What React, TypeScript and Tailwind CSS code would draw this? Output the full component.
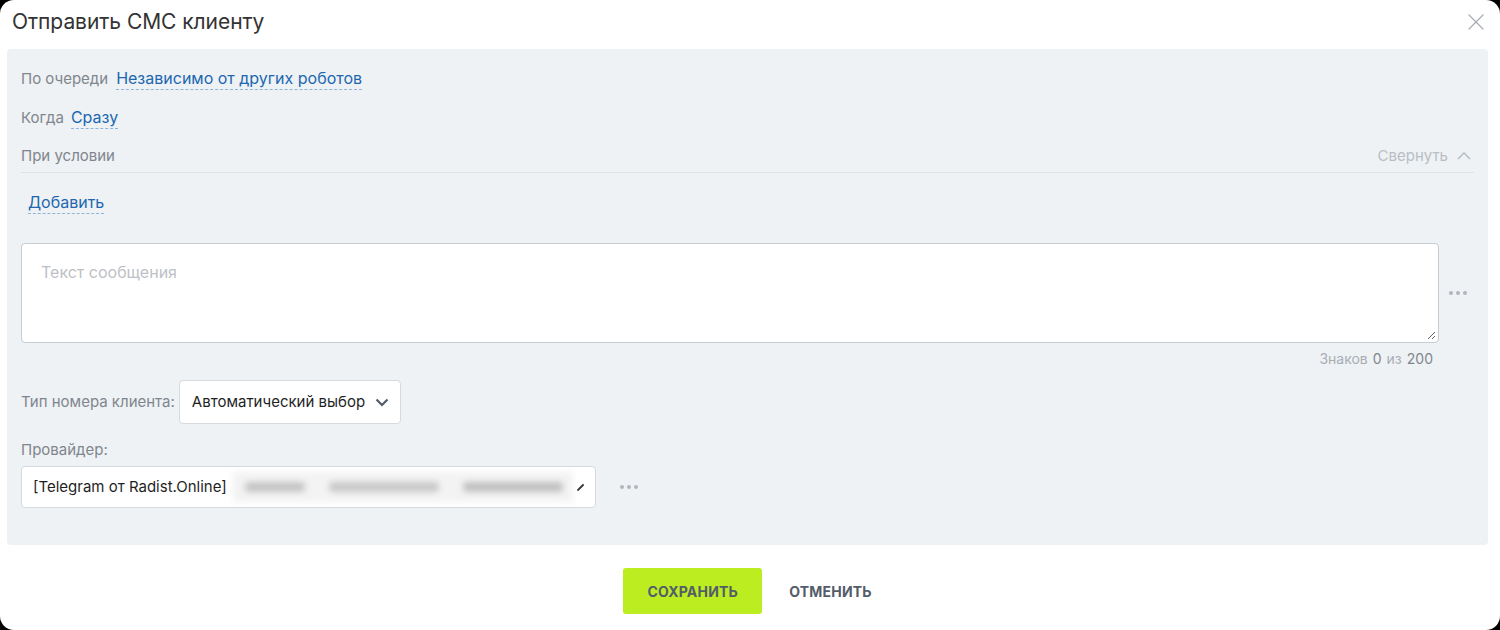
import { X } from "lucide-react";

const font = { fontFamily: "Inter, 'Noto Sans', sans-serif" };

const Dots = () => (
  <div className="flex gap-[3px] px-2">
    <span className="w-[4px] h-[4px] rounded-full bg-[#b1b6bc]" />
    <span className="w-[4px] h-[4px] rounded-full bg-[#b1b6bc]" />
    <span className="w-[4px] h-[4px] rounded-full bg-[#b1b6bc]" />
  </div>
);

const Link = ({ children }: { children: string }) => (
  <span className="text-[16px] text-[#2067b0] border-b border-dashed border-[#8fb3d9] leading-[20px] pb-[1px] cursor-pointer">
    {children}
  </span>
);

export default function App() {
  return (
    <div className="w-[1500px] h-[630px] bg-black" style={font}>
      <div className="w-full h-full bg-white rounded-[14px] flex flex-col">
        <div className="flex items-center justify-between h-[42px] pl-[12px] pr-[10px] pt-[1px]">
          <h1 className="text-[21px] text-[#333] tracking-[-0.05px]">Отправить СМС клиенту</h1>
          <X className="w-[28px] h-[28px] text-[#a8adb3]" strokeWidth={1.1} />
        </div>

        <div className="ml-[7px] mr-[12px] mt-[7px] h-[496px] bg-[#eef2f4] rounded-[4px] px-[14px] pt-[19px] text-[15px]">
          <div className="flex items-center gap-[8px] h-[22px]">
            <span className="text-[#80868e]">По очереди</span>
            <Link>Независимо от других роботов</Link>
          </div>
          <div className="flex items-center gap-[7px] h-[22px] mt-[17px]">
            <span className="text-[#80868e]">Когда</span>
            <Link>Сразу</Link>
          </div>
          <div className="flex items-center justify-between h-[24px] mt-[15px] border-b border-[#dde2e6] pb-[4px] box-content">
            <span className="text-[#80868e]">При условии</span>
            <span className="flex items-center gap-[9px] text-[#b9bec4] pr-[3px]">
              Свернуть
              <svg width="14" height="8" viewBox="0 0 14 8">
                <path d="M1 7 L7 1 L13 7" fill="none" stroke="#b9bec4" strokeWidth="1.6" />
              </svg>
            </span>
          </div>
          <div className="flex items-center h-[22px] mt-[19px] pl-[7px]">
            <Link>Добавить</Link>
          </div>

          <div className="flex items-center mt-[29px]">
            <div className="relative shrink-0 w-[1418px] h-[100px] bg-white border border-[#c6cdd3] rounded-[4px]">
              <div className="absolute left-[19px] top-[16px] text-[16px] text-[#bdc1c5]">Текст сообщения</div>
              <svg className="absolute right-[2px] bottom-[2px]" width="10" height="10" viewBox="0 0 10 10">
                <path d="M9 2 L2 9 M9 6 L6 9" stroke="#666" strokeWidth="1" />
              </svg>
            </div>
            <div className="pl-[2px]">
              <Dots />
            </div>
          </div>
          <div className="w-[1412px] flex justify-end gap-[5px] text-[14px] text-[#a8adb4] mt-[4px] h-[22px] items-center">
            <span>Знаков</span>
            <span className="text-[#80868e]">0</span>
            <span>из</span>
            <span className="text-[#80868e]">200</span>
          </div>

          <div className="flex items-center gap-[4px] mt-[11px]">
            <span className="text-[#80868e]">Тип номера клиента:</span>
            <div className="flex items-center justify-between w-[222px] h-[44px] bg-white border border-[#d5dadf] rounded-[4px] pl-[12px] pr-[11px] text-[#1f1f1f]">
              <span className="whitespace-nowrap">Автоматический выбор</span>
              <svg width="14" height="9" viewBox="0 0 14 9">
                <path d="M1.5 1.5 L7 7 L12.5 1.5" fill="none" stroke="#525c69" strokeWidth="2.2" />
              </svg>
            </div>
          </div>

          <div className="text-[#80868e] mt-[15px] h-[22px] flex items-center">Провайдер:</div>
          <div className="flex items-center mt-[5px]">
            <div className="flex items-center shrink-0 w-[575px] h-[42px] bg-white border border-[#d5dadf] rounded-[4px] pl-[11px] pr-[10px] text-[#1f1f1f] overflow-hidden">
              <span className="whitespace-nowrap">[Telegram от Radist.Online]</span>
              <div className="relative ml-[6px] flex-1 h-[30px] bg-[#f3f3f3] blur-[3px] flex items-center gap-[24px] pl-[12px] overflow-hidden">
                <span className="h-[10px] w-[60px] rounded bg-[#c4c4c4]" />
                <span className="h-[10px] w-[110px] rounded bg-[#c8c8c8]" />
                <span className="h-[10px] w-[100px] rounded bg-[#c0c0c0]" />
              </div>
              <svg width="8" height="8" viewBox="0 0 8 8" className="ml-[4px]">
                <path d="M1 7 L6 2" stroke="#333" strokeWidth="1.8" strokeLinecap="round" />
              </svg>
            </div>
            <div className="pl-[16px]">
              <Dots />
            </div>
          </div>
        </div>

        <div className="flex justify-center items-center gap-[10px] mt-[23px] pl-[12px]">
          <button className="w-[139px] h-[46px] bg-[#bbed21] rounded-[3px] text-[14px] font-bold text-[#535c69] tracking-[0.2px]">
            СОХРАНИТЬ
          </button>
          <button className="px-[17px] h-[46px] text-[14px] font-bold text-[#535c69] tracking-[0.2px]">
            ОТМЕНИТЬ
          </button>
        </div>
      </div>
    </div>
  );
}
